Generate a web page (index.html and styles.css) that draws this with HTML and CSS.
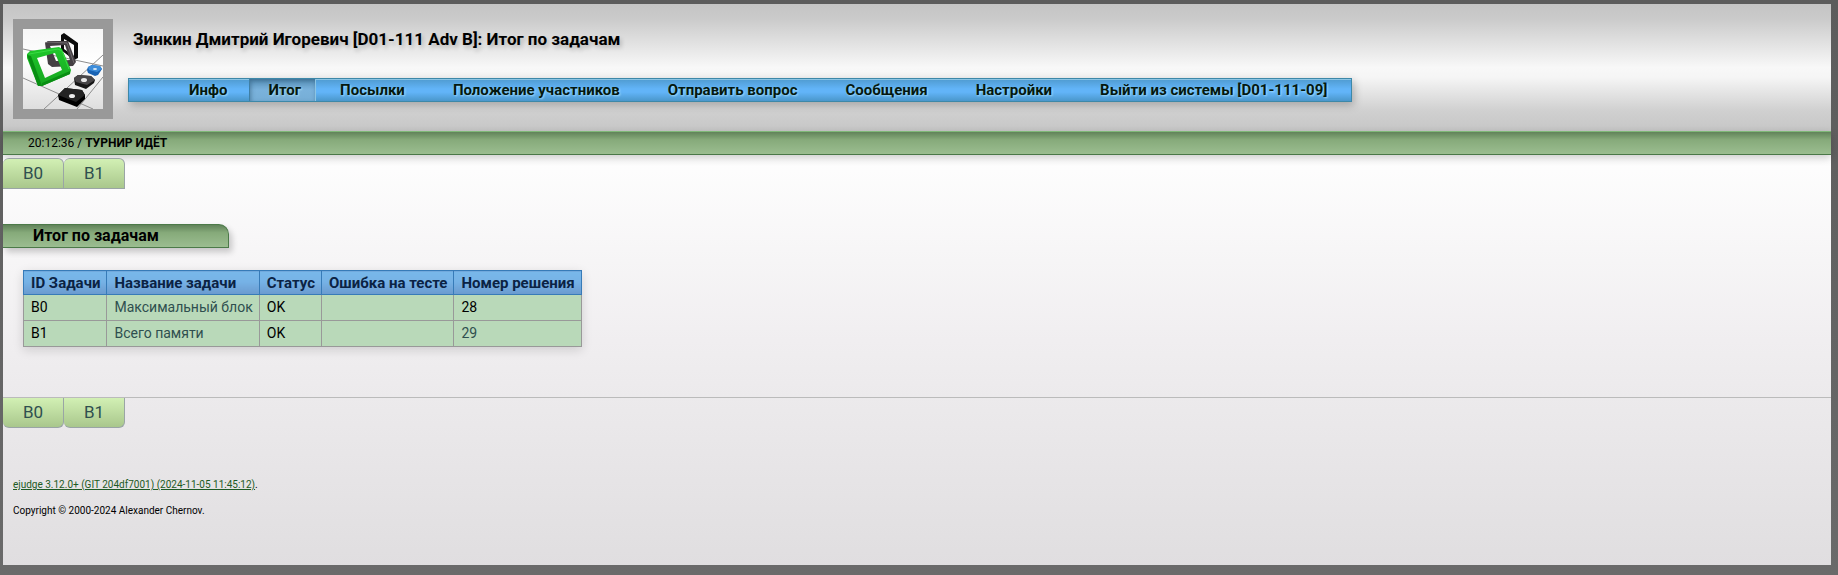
FILE: index.html
```html
<!DOCTYPE html>
<html lang="ru">
<head>
<meta charset="utf-8">
<title>Итог по задачам</title>
<link rel="stylesheet" href="styles.css">
</head>
<body>
<div class="page">
  <header class="header">
    <svg class="logo" viewBox="0 0 80 80" role="img" aria-label="ejudge">
      <defs>
        <linearGradient id="floor" x1="0" y1="0" x2="0" y2="1">
          <stop offset="0" stop-color="#f6f6f6"/><stop offset=".4" stop-color="#fff"/><stop offset="1" stop-color="#dedede"/>
        </linearGradient>
        <linearGradient id="green" x1="0" y1="0" x2="0" y2="1">
          <stop offset="0" stop-color="#20c82c"/><stop offset="1" stop-color="#15a51f"/>
        </linearGradient>
      </defs>
      <rect width="80" height="80" fill="url(#floor)"/>
      <path d="M0 20L80 37M0 49L70 80M21 80L80 26M54 80L80 48" stroke="#8d8d8d" fill="none"/>
      <path d="M38 6L41 4L55 14V29L51 31L38 21ZM41 10V20L51 27V16Z" fill="#0b0b0b" fill-rule="evenodd"/>
      <path d="M22 14L25 12L45 12L53 33L50 37L29 38L25 35ZM27 17L33 32L47 31L42 16Z" fill="#443f43" fill-rule="evenodd"/>
      <path d="M22 14L25 13L44 14L51 34" fill="none" stroke="#706b6f"/>
      <path d="M4 25L7 22L36 18L39 20L48 41L47 45L19 57L15 57L4 29ZM14 29L22 49L39 41L32 24Z" fill="url(#green)" fill-rule="evenodd"/>
      <path d="M4 26L15 57L19 57L8 27ZM19 54L47 42V45L19 57Z" fill="#098e13"/>
      <path d="M6 25L35 20L39 22L46 40" fill="none" stroke="#39dc43"/>
      <path d="M65 38L69 36L77 37L79 40L75 46L72 47L65 44L64 41Z" fill="#1963b4"/>
      <path d="M65 38L69 36L77 37L79 40L74 43L66 41Z" fill="#3d8dda"/>
      <ellipse cx="72" cy="40" rx="2" ry="1" fill="#d8e8f7"/>
      <path d="M51 49L55 46L68 47L72 51L71 54L63 60L52 56Z" fill="#171717"/>
      <path d="M51 49L55 46L68 47L72 51L64 56L53 53Z" fill="#484648"/>
      <ellipse cx="61" cy="51" rx="3" ry="2" fill="#e8e8e8"/>
      <path d="M35 66L42 59L59 61L62 66V70L54 78L36 71Z" fill="#000"/>
      <path d="M35 66L42 59L59 61L62 66L53 73Z" fill="#232323"/>
      <ellipse cx="49" cy="67" rx="3" ry="2" fill="#ededed"/>
    </svg>
    <div class="heading">
      <h1 class="title">Зинкин Дмитрий Игоревич [D01-111 Adv B]: Итог по задачам</h1>
      <nav class="menu">
        <a class="menu-item" href="#">Инфо</a>
        <a class="menu-item menu-item-active" href="#" aria-current="page">Итог</a>
        <a class="menu-item" href="#">Посылки</a>
        <a class="menu-item" href="#">Положение участников</a>
        <a class="menu-item" href="#">Отправить вопрос</a>
        <a class="menu-item" href="#">Сообщения</a>
        <a class="menu-item" href="#">Настройки</a>
        <a class="menu-item" href="#">Выйти из системы [D01-111-09]</a>
      </nav>
    </div>
  </header>
  <div class="status"><span>20:12:36 / <b>ТУРНИР ИДЁТ</b></span></div>
  <nav class="tabs tabs-top">
    <a class="tab" href="#">B0</a>
    <a class="tab" href="#">B1</a>
  </nav>
  <main class="content">
    <h2 class="section-title">Итог по задачам</h2>
    <table class="summary">
      <thead>
        <tr><th>ID Задачи</th><th>Название задачи</th><th>Статус</th><th>Ошибка на тесте</th><th>Номер решения</th></tr>
      </thead>
      <tbody>
        <tr><td>B0</td><td><a href="#">Максимальный блок</a></td><td>OK</td><td></td><td>28</td></tr>
        <tr><td>B1</td><td><a href="#">Всего памяти</a></td><td>OK</td><td></td><td><a href="#">29</a></td></tr>
      </tbody>
    </table>
  </main>
  <nav class="tabs tabs-bottom">
    <a class="tab" href="#">B0</a>
    <a class="tab" href="#">B1</a>
  </nav>
  <footer class="footer">
    <p><a href="#">ejudge 3.12.0+ (GIT 204df7001) (2024-11-05 11:45:12)</a>.</p>
    <p>Copyright © 2000-2024 Alexander Chernov.</p>
  </footer>
</div>
</body>
</html>
```
FILE: styles.css
```css
* { box-sizing: border-box; }

html { background: linear-gradient(#5c5c5c, #6a6a6a); }

body {
  margin: 0;
  padding: 4px 7px 10px 3px;
  font-family: Roboto, "Liberation Sans", sans-serif;
  font-size: 14px;
  color: #000;
}

h1, h2, p { margin: 0; }

a { color: #2f4f4f; text-decoration: none; }

.page { background: linear-gradient(#fff 25%, #f0eef0 60%, #e0dee0); }

.header {
  display: flex;
  gap: 15px;
  padding: 15px 10px 12px;
  background: linear-gradient(#c4c4c4, #cbcbcb 12%, #f8f8f8 50%, #f5f5f5 58%, #d0d0d0 84%, #c6c6c6);
}

.logo {
  flex: none;
  width: 100px;
  height: 100px;
  border: 10px solid #999;
}

.title {
  padding: 8px 5px 0;
  font-size: 17px;
  line-height: 24px;
  text-shadow: 2px 3px 4px rgba(0, 0, 0, .2);
}

.menu {
  display: flex;
  width: max-content;
  margin-top: 27px;
  padding: 0 0 0 36px;
  border: 1px solid #3d88a8;
  background: linear-gradient(#4f9bd0, #62b4f8 45%, #62b4f8 60%, #4a97cb);
  box-shadow: inset 0 1px #8cc5e4, 2px 3px 8px rgba(0, 0, 0, .25);
}

.menu-item {
  padding: 0 24px;
  font-size: 15px;
  font-weight: bold;
  line-height: 22px;
  color: #05180f;
  text-shadow: 1px 1px 2px rgba(190, 240, 255, .7);
}

.menu-item:first-child { padding-right: 22px; }

.menu-item-active {
  padding: 0 14px 0 18px;
  border-left: 1px solid #3f7fa5;
  border-right: 1px solid #8cc5e4;
  background: linear-gradient(#5690b8, #7ab2dc 50%, #76aed6);
  box-shadow: inset 1px 2px 4px rgba(40, 80, 110, .5);
}

.status {
  padding: 0 25px;
  border-top: 1px solid #7fb878;
  border-bottom: 1px solid #4a7848;
  background: linear-gradient(#61835a, #86aa7a 35%, #9bbd90);
  box-shadow: 0 3px 8px rgba(0, 0, 0, .2);
  font-size: 12px;
  line-height: 22px;
}

.tabs { display: flex; }

.tabs-top { margin-top: 3px; }

.tabs-bottom { border-top: 1px solid #bbb; }

.tab {
  width: 61px;
  border: 1px solid #9aa5a5;
  border-left: 0;
  background: linear-gradient(#d2f0b4, #a9c78c);
  font-size: 17px;
  line-height: 29px;
  text-align: center;
}

.tabs-top .tab { border-radius: 6px 6px 0 0; position: relative; }

.tabs-bottom .tab { border-top: 0; border-radius: 0 0 6px 6px; }

.content { padding: 35px 0 50px; }

.section-title {
  width: 226px;
  padding: 0 30px;
  border: 1px solid #4c7a49;
  border-left: 0;
  border-radius: 0 10px 0 0;
  background: linear-gradient(#61835a, #86aa7a 35%, #9bbd90);
  box-shadow: 3px 4px 6px rgba(0, 0, 0, .2);
  font-size: 16px;
  line-height: 22px;
}

.summary {
  margin: 22px 0 0 20px;
  border-collapse: collapse;
  box-shadow: 0 3px 10px rgba(0, 0, 0, .14);
}

.summary th, .summary td {
  padding: 0 6px 0 7px;
  text-align: left;
  white-space: nowrap;
}

.summary th {
  height: 24px;
  border: 1px solid #377bb8;
  background: linear-gradient(#78b8ea, #76b2e6 45%, #6a9ace);
  font-size: 15px;
  color: #0b2344;
}

.summary td {
  height: 26px;
  padding-bottom: 2px;
  border: 1px solid #999;
  background: #b9d9b9;
}

.footer {
  display: grid;
  gap: 14px;
  padding: 51px 10px 48px;
  font-size: 10px;
  line-height: 12px;
}

.footer a { color: #1d5a24; text-decoration: underline; }
```
